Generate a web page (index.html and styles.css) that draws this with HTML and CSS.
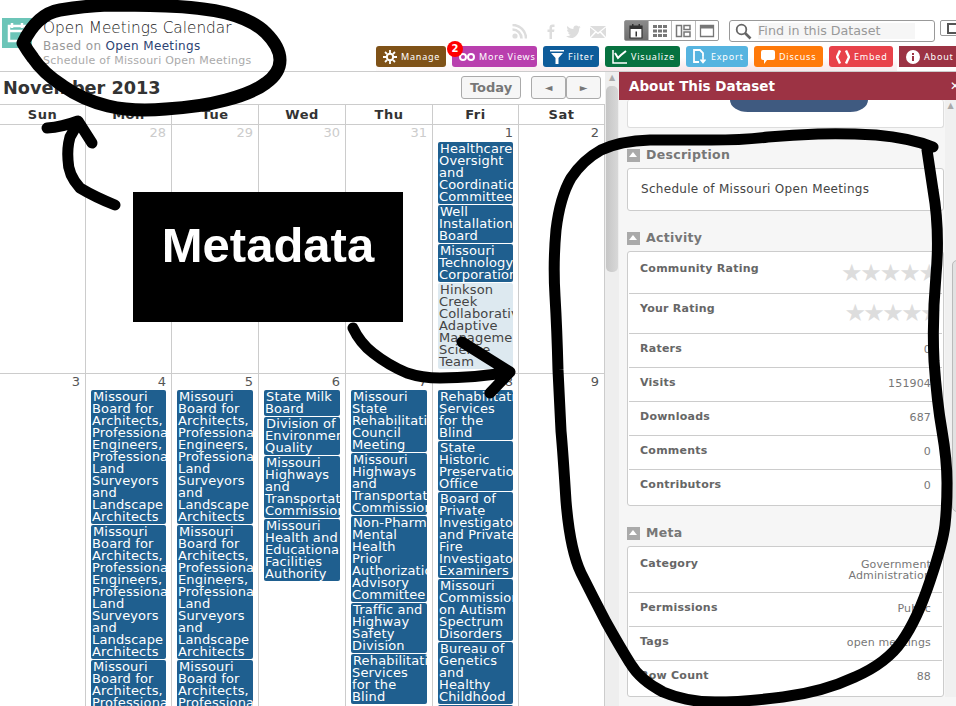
FILE: index.html
```html
<!DOCTYPE html>
<html lang="en">
<head>
  <meta charset="UTF-8">
  <title>Open Meetings Calendar</title>
  <link rel="stylesheet" href="styles.css">
</head>
<body>

  <!-- Cabecera -->
  <div class="header">
    <div class="brand">
      <div class="logo">
        <svg width="30" height="30" viewBox="0 0 30 30"><path d="M7 8h16v15H7z M10 5v5 M20 5v5 M7 13h16" fill="none" stroke="#fff" stroke-width="2.5"/></svg>
      </div>
      <div class="brand-text">
        <div class="title">Open Meetings Calendar</div>
        <div class="based">Based on <a class="based-link">Open Meetings</a></div>
        <div class="subtitle">Schedule of Missouri Open Meetings</div>
      </div>
    </div>
    <div class="header-right">
      <div class="tools">
        <div class="social">
          <svg class="rss" width="15" height="15" viewBox="0 0 15 15"><circle cx="3" cy="12" r="2.6" fill="#ddd"/><path d="M0.5 5.5a9 9 0 0 1 9 9M0.5 1a13.500 13.500 0 0 1 13.500 13.500" fill="none" stroke="#ddd" stroke-width="2.600"/></svg>
          <svg class="fb" width="8" height="15" viewBox="0 0 8 15"><path d="M2.500 15V8H0.500V5.500h2V3.500C2.500 1.500 3.500 0.500 5.500 0.500H7.500V3H6C5.300 3 5 3.300 5 4V5.500h2.500L7 8H5v7z" fill="#ddd"/></svg>
          <svg class="tw" width="15" height="13" viewBox="0 0 15 13"><path d="M0 11c2 .3 3.500-.2 4.800-1.200C3.400 9.700 2.400 8.900 2 7.700c.5.100 1 .1 1.400-.1C2 7.200 1 6 1 4.500c.4.300.9.400 1.400.4C1 3.900.700 2.200 1.400 1c1.500 1.900 3.500 3 6 3.100C7 2 8.400.5 10.200.5c.9 0 1.700.4 2.200 1 .7-.1 1.300-.4 1.900-.7-.2.700-.7 1.300-1.300 1.600.6-.1 1.200-.2 1.700-.5-.4.600-.9 1.100-1.500 1.500C13.300 8 9.800 13 5 13c-1.800 0-3.500-.7-5-2z" fill="#ddd"/></svg>
          <svg class="mail" width="16" height="12" viewBox="0 0 16 12"><path d="M0 0h16L8 6.500z M0 1.500V11l5-5.500z M16 1.500V11l-5-5.500z M1 12l5-5.300 2 1.600 2-1.600 5 5.300z" fill="#ddd"/></svg>
        </div>
        <div class="view-switch">
          <div class="view-btn active">
            <svg width="16" height="16" viewBox="0 0 16 16"><path d="M2 3h12v12H2z" fill="#fff" stroke="#333" stroke-width="1.200"/><path d="M2 3h12v3H2z M4 1h1.500v3H4z M10.500 1H12v3h-1.500z M7.500 8.500h1.500v5H7.500z" fill="#333"/></svg>
          </div>
          <div class="view-btn">
            <svg width="16" height="14" viewBox="0 0 16 14"><path d="M1 1h4v3H1z M6 1h4v3H6z M11 1h4v3h-4z M1 5.500h4v3H1z M6 5.500h4v3H6z M11 5.500h4v3h-4z M1 10h4v3H1z M6 10h4v3H6z M11 10h4v3h-4z" fill="#777"/></svg>
          </div>
          <div class="view-btn">
            <svg width="16" height="14" viewBox="0 0 16 14"><path d="M1.500 1.500h5v11h-5z M9 1.500h6v4H9z M9 8h6v4.500H9z" fill="none" stroke="#777" stroke-width="1.500"/></svg>
          </div>
          <div class="view-btn">
            <svg width="16" height="14" viewBox="0 0 16 14"><path d="M1.500 1.500h13v11h-13z" fill="none" stroke="#777" stroke-width="1.300"/><path d="M1.500 1.500h13v3h-13z" fill="#777"/></svg>
          </div>
        </div>
        <div class="search">
          <svg width="17" height="17" viewBox="0 0 17 17"><circle cx="6.500" cy="6.500" r="4.800" fill="none" stroke="#666" stroke-width="1.800"/><path d="M10 10l5.500 5.500" stroke="#666" stroke-width="2.600"/></svg>
          <div class="search-input">Find in this Dataset</div>
        </div>
        <div class="full-btn"><span class="full-icon"></span></div>
      </div>
      <div class="tabs">
        <div class="tab tab-manage">
          <svg width="14" height="14" viewBox="0 0 14 14"><circle cx="7" cy="7" r="3.200" fill="none" stroke="#fff" stroke-width="2"/><path d="M7 0v3 M7 11v3 M0 7h3 M11 7h3 M2 2l2.200 2.200 M9.800 9.800L12 12 M12 2L9.800 4.200 M4.200 9.800L2 12" stroke="#fff" stroke-width="1.800"/></svg>
          Manage
        </div>
        <div class="tab tab-views">
          <svg width="16" height="10" viewBox="0 0 16 10"><circle cx="4" cy="5" r="3" fill="none" stroke="#fff" stroke-width="2"/><circle cx="12" cy="5" r="3" fill="none" stroke="#fff" stroke-width="2"/></svg>
          More Views
          <span class="badge">2</span>
        </div>
        <div class="tab tab-filter">
          <svg width="14" height="14" viewBox="0 0 14 14"><path d="M0 0h14v1.500H0z M1 3h12L8.500 8v6h-3V8z" fill="#fff"/></svg>
          Filter
        </div>
        <div class="tab tab-visualize">
          <svg width="15" height="14" viewBox="0 0 15 14"><path d="M1 0v13h14" fill="none" stroke="#fff" stroke-width="1.500"/><path d="M3 3l3 5 3-3 5-4" fill="none" stroke="#fff" stroke-width="2"/></svg>
          Visualize
        </div>
        <div class="tab tab-export">
          <svg width="14" height="15" viewBox="0 0 14 15"><path d="M6 13H1V1h6l3 3v3" fill="none" stroke="#fff" stroke-width="1.800"/><path d="M10 7v5 M7.500 10.500l2.500 3 2.500-3" fill="none" stroke="#fff" stroke-width="1.600"/></svg>
          Export
        </div>
        <div class="tab tab-discuss">
          <svg width="14" height="14" viewBox="0 0 14 14"><path d="M2 0h10a2 2 0 0 1 2 2v6a2 2 0 0 1-2 2H6l-3 4v-4H2a2 2 0 0 1-2-2V2a2 2 0 0 1 2-2z" fill="#fff"/></svg>
          Discuss
        </div>
        <div class="tab tab-embed">
          <svg width="14" height="14" viewBox="0 0 14 14"><path d="M4 0.500L1 7l3 6.500 M10 0.500L13 7l-3 6.500" fill="none" stroke="#fff" stroke-width="2.400"/></svg>
          Embed
        </div>
        <div class="tab tab-about">
          <svg width="14" height="14" viewBox="0 0 14 14"><circle cx="7" cy="7" r="7" fill="#fff"/><path d="M6 3h2v2H6z M6 6h2v5H6z" fill="#9c3344"/></svg>
          About
        </div>
      </div>
    </div>
  </div>

  <div class="main">
    <!-- Calendario -->
    <div class="calendar">
      <div class="cal-toolbar">
        <h1 class="month">November 2013</h1>
        <div class="cal-btn today">Today</div>
        <div class="cal-nav">
          <div class="cal-btn arrow">&#9668;</div>
          <div class="cal-btn arrow">&#9658;</div>
        </div>
      </div>
      <div class="cal-head">
        <div>Sun</div><div>Mon</div><div>Tue</div><div>Wed</div><div>Thu</div><div>Fri</div><div>Sat</div>
      </div>
      <div class="cal-week week-one">
        <div class="day"><div class="num other"></div></div>
        <div class="day"><div class="num other">28</div></div>
        <div class="day"><div class="num other">29</div></div>
        <div class="day"><div class="num other">30</div></div>
        <div class="day"><div class="num other">31</div></div>
        <div class="day">
          <div class="num">1</div>
          <div class="event">Healthcare Oversight and Coordination Committee</div>
          <div class="event">Well Installation Board</div>
          <div class="event">Missouri Technology Corporation</div>
          <div class="event pale">Hinkson Creek Collaborative Adaptive Management Science Team</div>
        </div>
        <div class="day"><div class="num">2</div></div>
      </div>
      <div class="cal-week">
        <div class="day"><div class="num">3</div></div>
        <div class="day">
          <div class="num">4</div>
          <div class="event">Missouri Board for Architects, Professional Engineers, Professional Land Surveyors and Landscape Architects</div>
          <div class="event">Missouri Board for Architects, Professional Engineers, Professional Land Surveyors and Landscape Architects</div>
          <div class="event">Missouri Board for Architects, Professional Engineers, Professional Land Surveyors and Landscape Architects</div>
        </div>
        <div class="day">
          <div class="num">5</div>
          <div class="event">Missouri Board for Architects, Professional Engineers, Professional Land Surveyors and Landscape Architects</div>
          <div class="event">Missouri Board for Architects, Professional Engineers, Professional Land Surveyors and Landscape Architects</div>
          <div class="event">Missouri Board for Architects, Professional Engineers, Professional Land Surveyors and Landscape Architects</div>
        </div>
        <div class="day">
          <div class="num">6</div>
          <div class="event">State Milk Board</div>
          <div class="event">Division of Environmental Quality</div>
          <div class="event">Missouri Highways and Transportation Commission</div>
          <div class="event">Missouri Health and Educational Facilities Authority</div>
        </div>
        <div class="day">
          <div class="num">7</div>
          <div class="event">Missouri State Rehabilitation Council Meeting</div>
          <div class="event">Missouri Highways and Transportation Commission</div>
          <div class="event"><span class="nobreak">Non-Pharmaceutical</span> Mental Health Prior Authorization Advisory Committee</div>
          <div class="event">Traffic and Highway Safety Division</div>
          <div class="event">Rehabilitation Services for the Blind</div>
        </div>
        <div class="day">
          <div class="num">8</div>
          <div class="event">Rehabilitation Services for the Blind</div>
          <div class="event">State Historic Preservation Office</div>
          <div class="event">Board of Private Investigators <span class="nobreak">and Private</span> Fire Investigator Examiners</div>
          <div class="event">Missouri Commission on Autism Spectrum Disorders</div>
          <div class="event">Bureau of Genetics and Healthy Childhood</div>
          <div class="event">Missouri Board</div>
        </div>
        <div class="day"><div class="num">9</div></div>
      </div>
    </div>

    <div class="cal-scroll">
      <div class="scroll-arrow">&#9650;</div>
      <div class="cal-thumb"></div>
    </div>

    <!-- Panel lateral -->
    <div class="panel">
      <div class="panel-bar">
        <span>About This Dataset</span>
        <span class="panel-close">&#10005;</span>
      </div>
      <div class="panel-content">
        <div class="panel-body">
          <div class="box top-box"><div class="top-image"></div></div>

          <div class="section">
            <div class="section-head"><span class="toggle"></span>Description</div>
            <div class="box desc">Schedule of Missouri Open Meetings</div>
          </div>

          <div class="section">
            <div class="section-head"><span class="toggle"></span>Activity</div>
            <div class="box">
              <div class="row row-rating first">
                <span class="label">Community Rating</span>
                <span class="stars">&#9733;&#9733;&#9733;&#9733;&#9733;</span>
              </div>
              <div class="row row-rating">
                <span class="label">Your Rating</span>
                <span class="stars your-stars">&#9733;&#9733;&#9733;&#9733;&#9733;</span>
              </div>
              <div class="row"><span class="label">Raters</span><span class="value">0</span></div>
              <div class="row"><span class="label">Visits</span><span class="value">151904</span></div>
              <div class="row"><span class="label">Downloads</span><span class="value">687</span></div>
              <div class="row"><span class="label">Comments</span><span class="value">0</span></div>
              <div class="row"><span class="label">Contributors</span><span class="value">0</span></div>
            </div>
          </div>

          <div class="section">
            <div class="section-head"><span class="toggle"></span>Meta</div>
            <div class="box">
              <div class="row first row-category">
                <span class="label">Category</span>
                <span class="value">Government<br>Administration</span>
              </div>
              <div class="row"><span class="label">Permissions</span><span class="value">Public</span></div>
              <div class="row"><span class="label">Tags</span><span class="value">open meetings</span></div>
              <div class="row"><span class="label">Row Count</span><span class="value">88</span></div>
            </div>
          </div>
        </div>
        <div class="panel-scroll">
          <div class="scroll-arrow">&#9650;</div>
          <div class="panel-thumb"></div>
        </div>
      </div>
    </div>
  </div>

  <!-- Anotaciones dibujadas a mano encima de la captura -->
  <svg class="scribble" width="956" height="706" viewBox="0 0 956 706">
    <path class="oval" d="M23 43 Q37 14 60 10 Q83 6 108 5 Q133 5 166 6 Q200 7 226 13 Q253 20 266 33 Q280 47 280 60 Q280 73 266 83 Q253 93 226 100 Q200 107 166 109 Q133 112 108 106 Q83 100 63 86 Q43 73 33 58 Q27 50 23 43"/>
    <path d="M115 205 Q95 197 80 188 Q68 175 68 160 Q67 148 70 137 L78 123 M47 128 Q62 127 78 121 L92 143"/>
    <path d="M353 328 Q360 343 373 353 Q388 365 407 373 Q422 378 440 378 Q475 378 510 372 M462 342 L510 372 L490 393"/>
    <path d="M933 147 Q910 138 876 135 Q843 133 818 134 Q793 135 768 137 Q743 140 711 140 Q680 140 650 140 Q620 141 601 150 Q583 160 571 178 Q560 197 556 230 Q553 263 555 296 Q557 330 558 370 Q560 410 561 431 Q563 453 566 501 Q570 550 581 573 Q593 597 606 622 Q620 647 630 663 Q640 680 663 692 Q687 702 715 702 Q743 702 783 697 Q823 692 855 677 Q887 663 902 641 Q917 620 930 581 Q943 543 945 525 Q947 507 947 483 Q947 460 942 431 Q937 403 934 361 Q932 320 936 275 Q940 230 933 190 L927 150"/>
  </svg>
  <div class="metadata-label">Metadata</div>

</body>
</html>
```

FILE: styles.css
```css
body {
  font-family: "DejaVu Sans", sans-serif;
  margin: 0;
  padding: 0;
  width: 956px;
  height: 706px;
  overflow: hidden;
  position: relative;
  background-color: #fff;
  color: #333;
}

/* Cabecera */
.header {
  display: flex;
  height: 71px;
  border-bottom: 1px solid #ccc;
}

.brand {
  width: 376px;
  display: flex;
  padding: 18px 0 0 2px;
  box-sizing: border-box;
}

.logo {
  width: 30px;
  height: 30px;
  background-color: #6cc5b8;
  margin-right: 11px;
}

.brand-text {
  margin-top: 1px;
}

.title {
  font-size: 15.300px;
  font-weight: 200;
  line-height: 19px;
  color: #222;
  white-space: nowrap;
}

.based {
  font-size: 12px;
  line-height: 15px;
  margin-top: 1px;
  color: #999;
  letter-spacing: 0.35px;
}

.based-link {
  color: #2d4373;
}

.subtitle {
  font-size: 11px;
  line-height: 13px;
  color: #aaa;
  letter-spacing: 0.25px;
  white-space: nowrap;
}

.header-right {
  flex: 1;
  min-width: 0;
  overflow: hidden;
  padding-top: 20px;
  background: radial-gradient(ellipse 420px 14px at 60% 100%, #f6e4e7, rgba(255, 255, 255, 0));
}

.tools {
  display: flex;
  align-items: flex-start;
  height: 21px;
  margin-bottom: 5px;
}

.tools > div {
  flex-shrink: 0;
}

.social {
  width: 248px;
  height: 21px;
  display: flex;
  align-items: flex-start;
}

.rss { margin: 4px 0 0 136px; }
.fb { margin: 4px 0 0 20px; }
.tw { margin: 5px 0 0 11px; }
.mail { margin: 6px 0 0 9px; }

.view-switch {
  display: flex;
  width: 95px;
  height: 21px;
  border: 1px solid #999;
  box-sizing: border-box;
  border-radius: 2px;
}

.view-btn {
  flex: 1;
  display: flex;
  align-items: center;
  justify-content: center;
  border-left: 1px solid #bbb;
}

.view-btn:first-child {
  border-left: none;
}

.view-btn.active {
  background: linear-gradient(#8a8a8a, #6f6f6f);
}

.search {
  display: flex;
  align-items: center;
  width: 206px;
  height: 22px;
  margin-left: 10px;
  padding-left: 5px;
  box-sizing: border-box;
  border: 1px solid #999;
  border-radius: 3px;
}

.search-input {
  width: 157px;
  margin-left: 6px;
  background-color: #f6f6f6;
  font-size: 12.700px;
  line-height: 16px;
  color: #999;
  white-space: nowrap;
}

.full-btn {
  width: 30px;
  height: 16px;
  margin-left: 5px;
  border: 1px solid #999;
  box-sizing: border-box;
  border-radius: 2px;
  padding: 2px 0 0 6px;
}

.full-icon {
  display: block;
  width: 10px;
  height: 7px;
  border: 2px solid #555;
}

.tabs {
  display: grid;
  grid-template-columns: 70px 85px 56px 75px 62px 69px 64px 60px;
  column-gap: 6px;
  height: 21px;
}

.tab {
  position: relative;
  display: flex;
  align-items: center;
  gap: 4px;
  padding-left: 7px;
  border-radius: 3px;
  font-family: "Noto Sans", sans-serif;
  font-size: 9px;
  letter-spacing: 0.8px;
  color: #fff;
  white-space: nowrap;
}

.tab-manage { background-color: #7f5218; }
.tab-views { background-color: #b93fae; }
.tab-filter { background-color: #0e5c9a; }
.tab-visualize { background-color: #077240; }
.tab-export { background-color: #56b4e0; }
.tab-discuss { background-color: #ff7a0a; }
.tab-embed { background-color: #e8424a; }

.tab-about {
  background-color: #9c3344;
  border-radius: 0;
  box-shadow: 0 0 0 2px #fff, 0 4px 0 2px #fff;
}

.badge {
  position: absolute;
  top: -5px;
  left: -5px;
  width: 16px;
  height: 16px;
  border-radius: 50%;
  background-color: #f00;
  font-family: "DejaVu Sans", sans-serif;
  font-size: 10px;
  font-weight: bold;
  line-height: 16px;
  letter-spacing: 0;
  text-align: center;
}

/* Calendario */
.main {
  display: flex;
  height: 634px;
  overflow: hidden;
}

.calendar {
  width: 605px;
  flex-shrink: 0;
}

.cal-toolbar {
  display: flex;
  align-items: flex-start;
  height: 32px;
  padding-top: 4px;
  box-sizing: border-box;
}

.month {
  flex: 1;
  margin: 1px 0 0 3px;
  font-size: 17.700px;
  line-height: 22px;
  font-weight: bold;
  color: #333;
  white-space: nowrap;
}

.cal-btn {
  height: 23px;
  box-sizing: border-box;
  border: 1px solid #aaa;
  border-radius: 3px;
  background-color: #f6f6f6;
  color: #777;
  font-size: 13px;
  line-height: 21px;
  font-weight: bold;
  text-align: center;
}

.today {
  width: 60px;
}

.cal-nav {
  display: flex;
  margin: 0 4px 0 10px;
}

.arrow {
  width: 35px;
  font-size: 10px;
}

.cal-head,
.cal-week {
  display: grid;
  grid-template-columns: 86px 86px 87px 87px 87px 86px 86px;
}

.cal-head {
  border-top: 1px solid #ccc;
  border-bottom: 1px solid #ccc;
  font-size: 13px;
  line-height: 19px;
  font-weight: bold;
  letter-spacing: 0.5px;
  text-align: center;
}

.cal-head div {
  border-right: 1px solid #ccc;
}

.cal-week {
  border-bottom: 1px solid #ccc;
}

.day {
  border-right: 1px solid #ccc;
  padding: 0 5px;
  min-width: 0;
  min-height: 248px;
}

.num {
  height: 16px;
  font-size: 13px;
  line-height: 15px;
  text-align: right;
  color: #555;
}

.week-one .num {
  height: 17px;
}

.num.other {
  color: #ccc;
}

.event {
  background-color: #1f5f8f;
  color: #fff;
  font-size: 13px;
  line-height: 12px;
  letter-spacing: 0.15px;
  padding: 1px 0 1px 1px;
  margin-bottom: 1px;
  border-radius: 2px;
  overflow: hidden;
  text-indent: 1px;
}

.event.pale {
  background-color: #dde9f0;
  color: #444;
}

.nobreak {
  white-space: nowrap;
}

.cal-scroll {
  width: 14px;
  flex-shrink: 0;
  background-color: #eee;
}

.scroll-arrow {
  height: 14px;
  font-size: 8px;
  line-height: 12px;
  color: #aaa;
  text-align: center;
}

.cal-thumb {
  height: 186px;
  margin: 0 1px;
  border-radius: 5px;
  background: linear-gradient(to right, #c6c6c6, #d8d8d8);
}

/* Panel lateral */
.panel {
  flex: 1;
  min-width: 0;
  background-color: #f6f6f6;
}

.panel-bar {
  display: flex;
  justify-content: space-between;
  height: 28px;
  padding-left: 10px;
  background-color: #9c3344;
  color: #fff;
  font-size: 13.500px;
  line-height: 28px;
  font-weight: bold;
}

.panel-close {
  width: 6px;
  overflow: hidden;
  font-size: 12px;
}

.panel-content {
  display: flex;
}

.panel-body {
  width: 326px;
  flex-shrink: 0;
  padding-left: 8px;
  box-sizing: border-box;
}

.box {
  width: 317px;
  box-sizing: border-box;
  background-color: #fff;
  border: 1px solid #ccc;
  border-radius: 3px;
}

.top-box {
  height: 28px;
  border-top: none;
  border-color: #ddd;
}

.top-image {
  width: 138px;
  height: 12px;
  margin-left: 102px;
  background-color: #3f5a80;
  border-radius: 0 0 18px 18px / 0 0 12px 12px;
}

.section {
  margin-top: 21px;
}

.section-head {
  display: flex;
  align-items: flex-start;
  height: 13px;
  margin-bottom: 6px;
  font-size: 12.500px;
  line-height: 12px;
  font-weight: bold;
  color: #777;
  letter-spacing: 0.3px;
}

.toggle {
  width: 13px;
  height: 13px;
  margin-right: 6px;
  box-sizing: border-box;
  background-color: #aaa;
  position: relative;
}

.toggle::after {
  content: "";
  position: absolute;
  left: 2px;
  top: 3px;
  border-left: 4.500px solid transparent;
  border-right: 4.500px solid transparent;
  border-bottom: 5px solid #fff;
}

.desc {
  height: 43px;
  padding-left: 13px;
  font-size: 12px;
  line-height: 41px;
  letter-spacing: 0.3px;
  color: #444;
}

.row {
  display: flex;
  justify-content: space-between;
  align-items: flex-start;
  height: 34px;
  box-sizing: border-box;
  margin: 0 1px;
  padding: 8px 11px 0 11px;
  border-top: 1px solid #ccc;
  font-size: 11px;
  line-height: 14px;
}

.row:last-child {
  height: 36px;
}

.row.first {
  border-top: none;
  padding-top: 10px;
  height: 41px;
}

.row-rating {
  height: 40px;
}

.row-category.first {
  height: 45px;
}

.row-category .value {
  margin-top: 2px;
  line-height: 11px;
}

.label {
  font-weight: bold;
  color: #666;
  letter-spacing: 0.25px;
  white-space: nowrap;
}

.value {
  margin-top: 1px;
  color: #777;
  letter-spacing: 0.15px;
  text-align: right;
}

.stars {
  font-size: 24px;
  line-height: 20px;
  margin: 1px -7px 0 0;
  color: #ddd;
  letter-spacing: -2.100px;
}

.your-stars {
  margin-right: -8px;
  letter-spacing: -2.600px;
}

.panel-scroll {
  flex: 1;
  min-width: 0;
  overflow: hidden;
  background-color: #f0f0f0;
}

.panel-thumb {
  height: 250px;
  margin: 146px -6px 0 7px;
  border: 1px solid #bbb;
  border-radius: 5px;
  background-color: #e2e2e2;
}

/* Anotaciones */
.scribble {
  position: absolute;
  top: 0;
  left: 0;
}

.scribble path {
  fill: none;
  stroke: #000;
  stroke-width: 11;
  stroke-linecap: round;
  stroke-linejoin: round;
}

.scribble .oval {
  stroke-width: 13;
}

.metadata-label {
  position: absolute;
  left: 133px;
  top: 192px;
  width: 270px;
  height: 130px;
  box-sizing: border-box;
  padding-top: 24px;
  background-color: #000;
  color: #fff;
  font-family: "Liberation Sans", sans-serif;
  font-size: 49px;
  line-height: 58px;
  font-weight: bold;
  text-align: center;
}
```
